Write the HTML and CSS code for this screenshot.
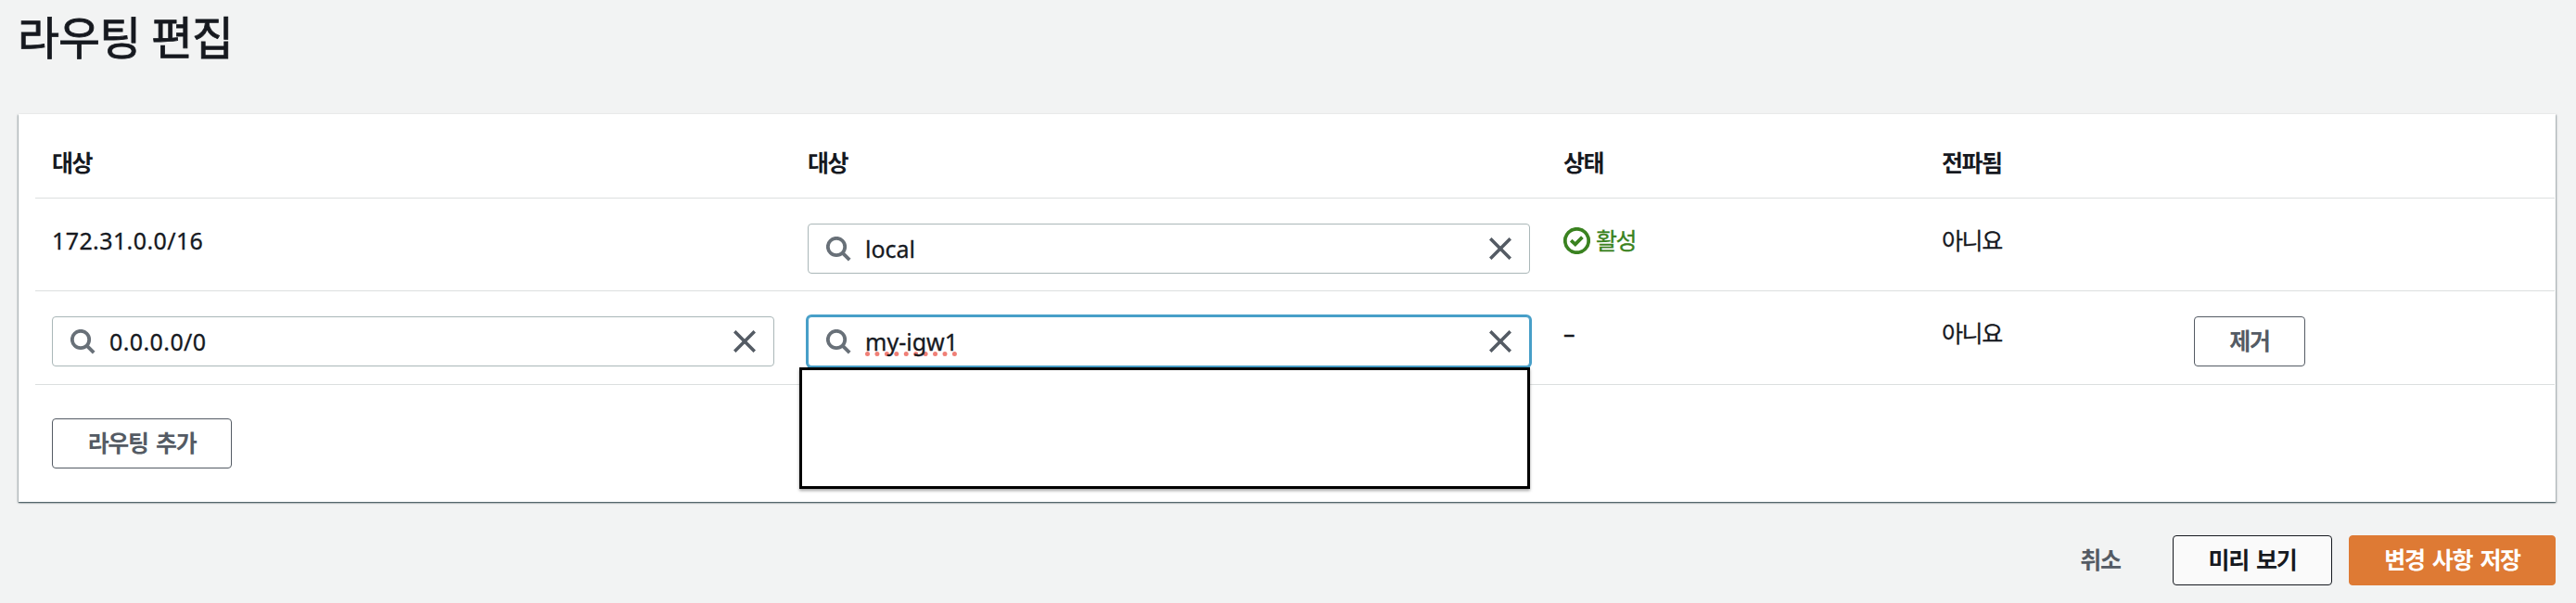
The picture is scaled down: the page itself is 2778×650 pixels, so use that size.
FILE: index.html
```html
<!DOCTYPE html>
<html lang="ko">
<head>
<meta charset="utf-8">
<title>라우팅 편집</title>
<link rel="stylesheet" href="styles.css">
</head>
<body>
<svg class="sprite" aria-hidden="true">
  <symbol id="search" viewBox="0 0 27 27"><circle cx="11" cy="11" r="9.2"/><path d="M17.6 17.6l7.6 7.6"/></symbol>
  <symbol id="close" viewBox="0 0 24 24"><path d="M1.2 1.2l21.6 21.6M22.8 1.2L1.2 22.8"/></symbol>
  <symbol id="check" viewBox="0 0 29 29"><circle cx="14.5" cy="14.5" r="12.7"/><path d="M8.2 14.2l4.6 4.1 7.6-7.6"/></symbol>
</svg>
<main class="page">
  <h1 class="title">라우팅 편집</h1>
  <section class="card">
    <div class="table">
      <div class="row head">
        <div>대상</div><div>대상</div><div>상태</div><div>전파됨</div>
      </div>
      <div class="row first">
        <div class="value cidr">172.31.0.0/16</div>
        <div class="field"><svg class="icon search"><use href="#search"/></svg><span class="entry">local</span><svg class="icon close"><use href="#close"/></svg></div>
        <div class="value status"><svg class="icon check"><use href="#check"/></svg><span>활성</span></div>
        <div class="value">아니요</div>
      </div>
      <div class="row second">
        <div class="field"><svg class="icon search"><use href="#search"/></svg><span class="entry cidr">0.0.0.0/0</span><svg class="icon close"><use href="#close"/></svg></div>
        <div class="field focused"><svg class="icon search"><use href="#search"/></svg><span class="entry"><span class="misspelled">my-igw1</span></span><svg class="icon close"><use href="#close"/></svg><div class="dropdown"></div></div>
        <div class="value">–</div>
        <div class="value">아니요</div>
        <button class="button remove">제거</button>
      </div>
    </div>
    <button class="button add">라우팅 추가</button>
  </section>
  <footer class="actions">
    <button class="button cancel">취소</button>
    <button class="button preview">미리 보기</button>
    <button class="button save">변경 사항 저장</button>
  </footer>
</main>
</body>
</html>
```
FILE: styles.css
```css
* { box-sizing: border-box; }
body {
  margin: 0;
  background: #f2f3f3;
  color: #16191f;
  font-family: "Noto Sans", "Noto Sans CJK KR", sans-serif;
  font-size: 25px;
  line-height: 36px;
}
.sprite { position: absolute; width: 0; height: 0; }
.page { height: 650px; padding: 0 22px 0 20px; overflow: hidden; }
.title {
  margin: 0 0 0 -1px;
  height: 123px;
  padding-top: 8px;
  font-size: 49px;
  line-height: 64px;
  font-weight: 400;
  letter-spacing: -1px;
  -webkit-text-stroke: .8px #16191f;
}
.card {
  height: 418px;
  background: #fff;
  box-shadow: 0 1px 1px 0 rgba(0, 28, 36, .45), 1px 1px 2px 0 rgba(0, 28, 36, .3), -1px 1px 2px 0 rgba(0, 28, 36, .3);
}
.table { margin: 0 1px 0 18px; }
.row {
  display: grid;
  grid-template-columns: 779px 779px 372px 236px 120px;
  column-gap: 36px;
  align-items: start;
  padding-left: 18px;
  border-bottom: 1px solid #dcdfdf;
}
.head { height: 91px; padding-top: 34px; font-weight: 700; letter-spacing: -1.5px; }
.first { height: 100px; padding-top: 27px; }
.second { height: 101px; padding-top: 27px; }
.value { height: 36px; letter-spacing: -1.4px; -webkit-text-stroke: .3px currentColor; }
.value.cidr, .entry.cidr { letter-spacing: .4px; }
.status { display: flex; align-items: center; gap: 6px; color: #3a8220; }
.field {
  position: relative;
  display: flex;
  align-items: center;
  height: 54px;
  padding: 0 19px;
  border: 1px solid #aab7b8;
  border-radius: 4px;
  background: #fff;
}
.entry { flex: 1; margin-left: 15px; -webkit-text-stroke: .3px currentColor; }
.focused { border-color: #479fc8; box-shadow: 0 0 0 2px #479fc8; }
.misspelled { text-decoration: underline dotted #f07f76 5px; text-underline-offset: 1px; text-decoration-skip-ink: none; }
.dropdown {
  position: absolute;
  left: -10px;
  top: 54px;
  width: 788px;
  height: 131px;
  border: 3px solid #000;
  background: #fff;
  box-shadow: 0 2px 3px rgba(0, 0, 0, .35);
}
.icon { flex: none; fill: none; stroke: #687078; stroke-width: 3.8; }
.search { width: 27px; height: 27px; }
.close { width: 24px; height: 24px; stroke: #545b64; stroke-width: 3.6; }
.check { width: 29px; height: 29px; stroke: #3a8220; }
.button {
  height: 54px;
  padding: 0 0 3px;
  border: 1px solid #545b64;
  border-radius: 4px;
  background: #fff;
  color: #545b64;
  font: inherit;
  font-weight: 700;
  letter-spacing: -1.3px;
  word-spacing: 3px;
  white-space: nowrap;
}
.remove { width: 120px; }
.add { display: block; width: 194px; margin: 36px 0 0 36px; }
.actions { display: flex; justify-content: flex-end; margin-top: 36px; }
.cancel { width: 124px; margin-right: 16px; border-color: transparent; background: transparent; }
.preview { width: 172px; margin-right: 18px; border-color: #16191f; background: #fafafa; color: #16191f; }
.save { width: 223px; border-color: #de7a34; background: #de7a34; color: #fff; }
```
